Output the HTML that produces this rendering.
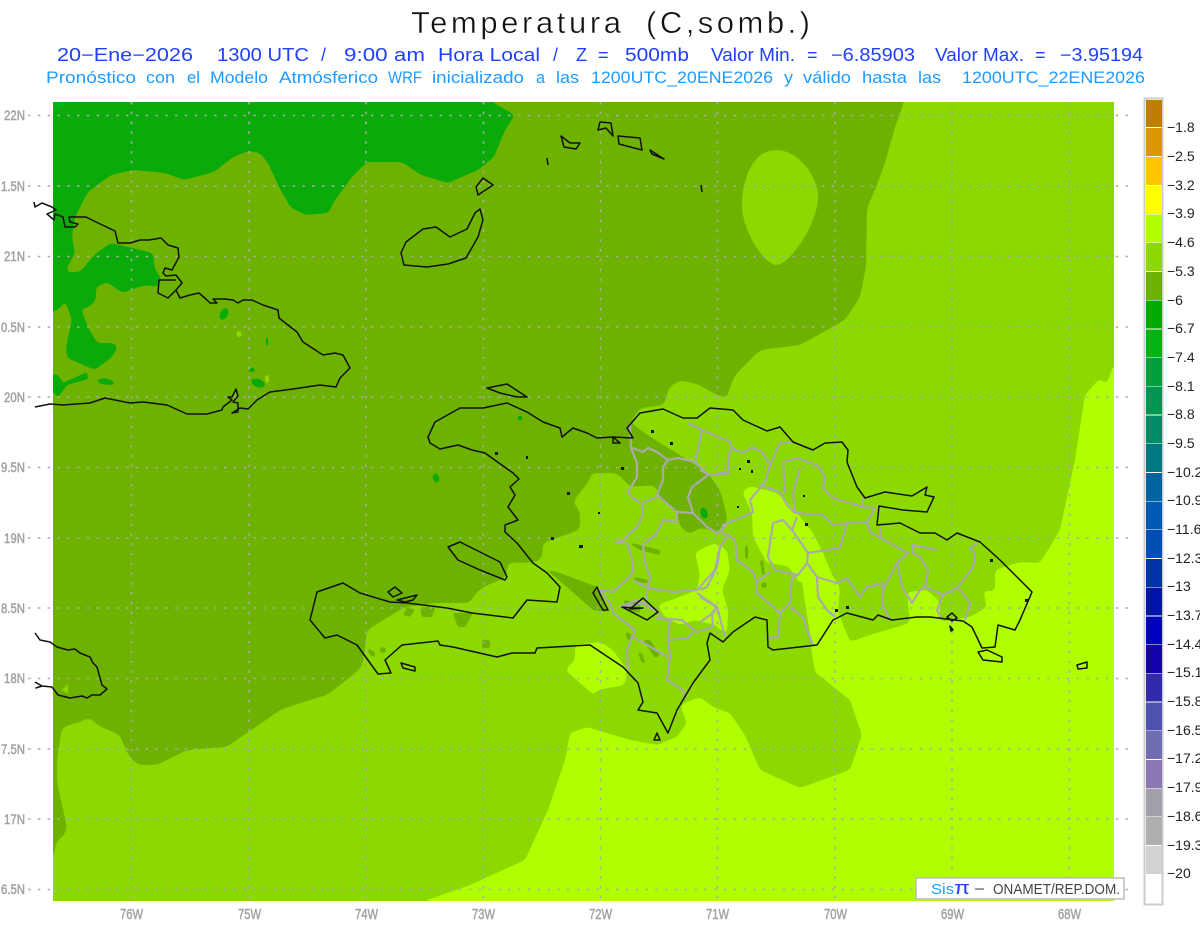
<!DOCTYPE html>
<html><head><meta charset="utf-8"><style>
html,body{margin:0;padding:0;background:#fff}
svg{display:block;font-family:"Liberation Sans",sans-serif}
.g{fill:none;stroke:#aaa;stroke-width:1.6;stroke-dasharray:2.5 7.3}
.c{fill:none;stroke:#111;stroke-width:1.5;stroke-linejoin:round}
.b{fill:none;stroke:#aaa;stroke-width:2.2;stroke-linejoin:round}
.l{fill:#a2a2a2;font-size:14px;stroke:#a2a2a2;stroke-width:.5}
.m{fill:#a2a2a2;font-size:15px;stroke:#a2a2a2;stroke-width:.5}
.t2{fill:#2040ff;font-size:18px}
.t3{fill:#1e9bff;font-size:17px}
.k{fill:#222;font-size:14px}
</style></head><body>
<svg width="1200" height="927" viewBox="0 0 1200 927" xmlns="http://www.w3.org/2000/svg">
<defs>
<clipPath id="mp"><rect x="53" y="102" width="1061" height="799"/></clipPath>
<filter id="s4" filterUnits="userSpaceOnUse" x="0" y="60" width="1200" height="867" color-interpolation-filters="sRGB">
<feGaussianBlur stdDeviation="4"/><feComponentTransfer><feFuncA type="linear" slope="14" intercept="-6.5"/></feComponentTransfer>
</filter>
<filter id="s3" filterUnits="userSpaceOnUse" x="0" y="60" width="1200" height="867" color-interpolation-filters="sRGB">
<feGaussianBlur stdDeviation="2.6"/><feComponentTransfer><feFuncA type="linear" slope="12" intercept="-5.5"/></feComponentTransfer>
</filter>
<filter id="s1" filterUnits="userSpaceOnUse" x="0" y="60" width="1200" height="867" color-interpolation-filters="sRGB">
<feGaussianBlur stdDeviation="1"/><feComponentTransfer><feFuncA type="linear" slope="6" intercept="-2.3"/></feComponentTransfer>
</filter>
</defs>
<rect width="1200" height="927" fill="#fff"/>
<g fill="#111" font-size="31" stroke="#fff" stroke-width=".45">
<text x="411" y="33" textLength="210" lengthAdjust="spacing">Temperatura</text>
<text x="646" y="33" textLength="164" lengthAdjust="spacing">(C,somb.)</text>
</g>
<g class="t2">
<text x="57" y="61" textLength="136" lengthAdjust="spacingAndGlyphs">20−Ene−2026</text>
<text x="217" y="61" textLength="92" lengthAdjust="spacingAndGlyphs">1300 UTC</text>
<text x="321" y="61">/</text>
<text x="344" y="61" textLength="81" lengthAdjust="spacingAndGlyphs">9:00 am</text>
<text x="438" y="61" textLength="102" lengthAdjust="spacingAndGlyphs">Hora Local</text>
<text x="553" y="61">/</text>
<text x="576" y="61">Z</text>
<text x="598" y="61">=</text>
<text x="625" y="61" textLength="64" lengthAdjust="spacingAndGlyphs">500mb</text>
<text x="711" y="61" textLength="84" lengthAdjust="spacingAndGlyphs">Valor Min.</text>
<text x="807" y="61">=</text>
<text x="831" y="61" textLength="84" lengthAdjust="spacingAndGlyphs">−6.85903</text>
<text x="935" y="61" textLength="89" lengthAdjust="spacingAndGlyphs">Valor Max.</text>
<text x="1035" y="61">=</text>
<text x="1060" y="61" textLength="83" lengthAdjust="spacingAndGlyphs">−3.95194</text>
</g>
<g class="t3">
<text x="46" y="83" textLength="90" lengthAdjust="spacingAndGlyphs">Pronóstico</text>
<text x="146" y="83" textLength="29" lengthAdjust="spacingAndGlyphs">con</text>
<text x="187" y="83" textLength="13" lengthAdjust="spacingAndGlyphs">el</text>
<text x="210" y="83" textLength="58" lengthAdjust="spacingAndGlyphs">Modelo</text>
<text x="279" y="83" textLength="99" lengthAdjust="spacingAndGlyphs">Atmósferico</text>
<text x="388" y="83" textLength="34" lengthAdjust="spacingAndGlyphs">WRF</text>
<text x="432" y="83" textLength="92" lengthAdjust="spacingAndGlyphs">inicializado</text>
<text x="536" y="83" textLength="9" lengthAdjust="spacingAndGlyphs">a</text>
<text x="556" y="83" textLength="23" lengthAdjust="spacingAndGlyphs">las</text>
<text x="591" y="83" textLength="182" lengthAdjust="spacingAndGlyphs">1200UTC_20ENE2026</text>
<text x="784" y="83" textLength="9" lengthAdjust="spacingAndGlyphs">y</text>
<text x="803" y="83" textLength="48" lengthAdjust="spacingAndGlyphs">válido</text>
<text x="862" y="83" textLength="45" lengthAdjust="spacingAndGlyphs">hasta</text>
<text x="918" y="83" textLength="23" lengthAdjust="spacingAndGlyphs">las</text>
<text x="962" y="83" textLength="183" lengthAdjust="spacingAndGlyphs">1200UTC_22ENE2026</text>
</g>

<!-- map fills -->
<g clip-path="url(#mp)">
<rect x="53" y="102" width="1061" height="799" fill="#8cd900"/>
<g fill="#b0ff00" filter="url(#s3)">
<polygon points="410,925 425,901 470,885 525,860 548,810 560,775 565,760 570,733 587,727 630,740 657,745 677,737 687,723 680,705 700,697 713,707 730,713 745,735 760,770 800,788 850,770 862,735 850,700 815,672 810,640 805,605 798,580 788,566 767,563 753,537 752,513 742,492 750,486 777,493 797,513 813,533 823,553 833,577 840,587 838,612 850,642 870,635 910,623 907,592 927,590 940,602 940,622 970,617 987,607 983,590 995,592 995,570 1020,562 1040,563 1060,530 1075,460 1085,395 1100,378 1107,385 1112,368 1140,345 1140,925"/>
<polygon points="695,552 715,543 727,550 730,570 722,590 728,610 727,635 715,625 695,620 680,625 665,617 657,605 677,598 697,590 700,575"/>
<polygon points="575,645 600,642 613,650 627,670 625,685 597,690 595,696 565,670 575,660"/>
</g>
<polygon fill="#8cd900" filter="url(#s1)" points="790,580 802,582 806,610 812,645 795,650 780,640 790,610"/>
<polygon fill="#6eb200" filter="url(#s4)" points="25,75 906,75 904,102 895,127 885,163 875,190 867,208 866,267 860,297 845,320 800,345 760,350 735,375 727,395 733,402 707,390 700,385 680,380 668,388 665,405 640,408 630,423 660,443 693,463 708,473 720,490 728,520 725,525 717,533 700,527 690,535 680,527 677,513 657,493 657,485 630,487 617,473 590,473 590,480 572,503 580,510 580,530 542,543 543,557 537,562 517,563 507,562 507,577 483,587 472,597 472,603 437,603 405,607 367,630 365,648 362,667 343,683 327,695 300,703 280,710 273,715 247,733 227,747 187,750 157,765 137,765 127,753 120,735 97,725 90,717 80,722 62,727 57,760 57,782 67,827 65,835 57,840 53,858 25,875"/>
<path fill="#8cd900" d="M776 150C800 150 820 180 818 200C816 225 790 265 776 265C760 262 742 225 742 207C742 175 755 150 776 150Z"/>
<g fill="#6eb200" filter="url(#s1)">
<polygon points="547,570 557,572 597,587 607,612 593,610 567,587"/>
<polygon points="627,542 660,550 660,555 640,550"/>
<polygon points="633,577 648,580 648,583 635,582"/>
<polygon points="407,607 415,610 410,617 403,615"/>
<polygon points="420,607 435,607 432,617 422,617"/>
<polygon points="453,613 473,613 465,627 458,627"/>
<polygon points="482,640 490,640 490,648 482,648"/>
<polygon points="367,648 375,652 375,657 370,655"/>
<ellipse cx="383" cy="650" rx="3" ry="3"/>
<polygon points="623,600 640,603 640,613 628,610"/>
<polygon points="643,640 650,640 660,655 655,658"/>
<polygon points="638,653 642,653 645,663 642,663"/>
<polygon points="625,633 630,633 632,640 628,640"/>
<polygon points="745,545 748,547 748,560 745,558"/>
<polygon points="760,560 763,560 765,575 762,575"/>
<ellipse cx="764" cy="585" rx="3" ry="3"/>
</g>
<g fill="#0aaa0a" filter="url(#s3)">
<polygon points="25,75 492,75 492,102 515,115 505,130 494,157 478,170 448,183 421,175 402,162 367,162 352,177 333,203 329,213 306,215 291,208 279,187 268,163 260,153 249,151 233,157 214,172 184,180 165,173 134,170 111,175 88,192 75,217 72,237 75,253 65,272 80,272 96,253 111,243 153,253 155,270 161,277 159,287 145,285 122,293 107,282 96,287 96,300 88,308 78,308 80,307 88,327 97,343 113,343 118,347 112,357 95,370 67,358 66,347 72,320 65,300 60,308 53,312 25,325"/>
</g>
<polygon fill="#00b414" points="53,102 70,102 60,108 53,112"/>
<g fill="#0aaa0a" filter="url(#s1)">
<polygon points="30,372 58,375 63,383 87,372 88,379 67,385 58,397 53,392 30,392"/>
<polygon points="97,380 105,378 113,381 114,385 100,384"/>
</g>
<g fill="#0aaa0a">
<ellipse cx="224" cy="314" rx="4" ry="6" transform="rotate(25 224 314)"/>
<ellipse cx="258" cy="383" rx="7" ry="4" transform="rotate(20 258 383)"/>
<ellipse cx="252" cy="370" rx="3" ry="2"/>
<rect x="266" y="338" width="2" height="7"/>
<ellipse cx="436" cy="478" rx="3" ry="4.5" transform="rotate(-20 436 478)"/>
<rect x="518" y="416" width="4" height="4"/>
<ellipse cx="704" cy="513" rx="3.5" ry="5.5" transform="rotate(-15 704 513)"/>
</g>
<g fill="#8cd900">
<ellipse cx="239" cy="334" rx="2.5" ry="3"/>
<ellipse cx="267" cy="379" rx="2" ry="4"/>
<polygon points="62,690 68,684 68,694"/>
</g>
</g>

<!-- grid -->
<g class="g">
<path d="M28 115.5H1132M28 186H1132M28 256.5H1132M28 327H1132M28 397H1132M28 467.5H1132M28 538H1132M28 608H1132M28 678.5H1132M28 749H1132M28 819H1132M28 889.5H1132"/>
<path d="M131.5 102V905M249 102V905M366 102V905M483.5 102V905M600.5 102V905M717.5 102V905M835 102V905M952 102V905M1069.5 102V905"/>
</g>
<g class="l">
<text x="4" y="120" textLength="21" lengthAdjust="spacingAndGlyphs">22N</text>
<text x="1" y="191" textLength="24" lengthAdjust="spacingAndGlyphs">1.5N</text>
<text x="4" y="261" textLength="21" lengthAdjust="spacingAndGlyphs">21N</text>
<text x="1" y="332" textLength="24" lengthAdjust="spacingAndGlyphs">0.5N</text>
<text x="4" y="402" textLength="21" lengthAdjust="spacingAndGlyphs">20N</text>
<text x="1" y="472" textLength="24" lengthAdjust="spacingAndGlyphs">9.5N</text>
<text x="4" y="543" textLength="21" lengthAdjust="spacingAndGlyphs">19N</text>
<text x="1" y="613" textLength="24" lengthAdjust="spacingAndGlyphs">8.5N</text>
<text x="4" y="683" textLength="21" lengthAdjust="spacingAndGlyphs">18N</text>
<text x="1" y="754" textLength="24" lengthAdjust="spacingAndGlyphs">7.5N</text>
<text x="4" y="824" textLength="21" lengthAdjust="spacingAndGlyphs">17N</text>
<text x="1" y="894" textLength="24" lengthAdjust="spacingAndGlyphs">6.5N</text>
</g>
<g class="m">
<text x="120" y="919" textLength="23" lengthAdjust="spacingAndGlyphs">76W</text>
<text x="238" y="919" textLength="23" lengthAdjust="spacingAndGlyphs">75W</text>
<text x="355" y="919" textLength="23" lengthAdjust="spacingAndGlyphs">74W</text>
<text x="472" y="919" textLength="23" lengthAdjust="spacingAndGlyphs">73W</text>
<text x="589" y="919" textLength="23" lengthAdjust="spacingAndGlyphs">72W</text>
<text x="706" y="919" textLength="23" lengthAdjust="spacingAndGlyphs">71W</text>
<text x="824" y="919" textLength="23" lengthAdjust="spacingAndGlyphs">70W</text>
<text x="941" y="919" textLength="23" lengthAdjust="spacingAndGlyphs">69W</text>
<text x="1058" y="919" textLength="23" lengthAdjust="spacingAndGlyphs">68W</text>
</g>

<!-- provincial borders -->
<g class="b">
<polyline points="630,423 631,448 637,463 637,477 628,492 633,498 643,505 642,517 637,527 623,540 615,543 627,543 633,562 633,573 623,583 613,592 603,590 600,590 610,603 613,613 635,630 627,650 628,670"/>
<polyline points="632,448 643,452 648,448 657,452 668,460 678,458 695,462 702,430 688,423"/>
<polyline points="702,430 730,442 732,448 743,453 752,447 762,452 770,465 780,443 792,442"/>
<polyline points="668,460 663,467 663,480 657,495 677,512 693,513 707,527 717,533 727,525"/>
<polyline points="643,503 657,497"/>
<polyline points="677,513 677,522 663,520 657,533 643,545 645,563 650,577 648,588 673,592 697,590 715,570 720,547 728,535 722,533 723,525 740,518 753,512 750,500 765,482 770,465"/>
<polyline points="633,580 648,588 645,603 620,607 637,600 658,612 663,620"/>
<polyline points="697,593 717,607 712,613 713,627 697,632 682,620 657,618 670,620 668,640 670,657 667,680 683,690 685,698"/>
<polyline points="633,637 668,657"/>
<polyline points="668,640 688,638 693,632"/>
<polyline points="695,462 708,475 730,473"/>
<polyline points="708,475 692,487 688,497 693,513"/>
<polyline points="732,448 728,457 728,472 710,475 700,470"/>
<polyline points="760,485 780,492 787,505 795,513 823,515 833,525 847,523 867,522 875,508 863,507 863,497"/>
<polyline points="783,462 797,458 817,465 825,477 823,488 833,498 863,507"/>
<polyline points="800,468 793,493 795,513"/>
<polyline points="783,462 785,493"/>
<polyline points="797,517 792,530 808,553 807,563 798,575 775,570 768,557 773,523 783,520 792,530"/>
<polyline points="808,553 840,548 847,523"/>
<polyline points="807,563 817,577 837,583 847,578 860,597 867,587 883,583 882,603 890,620"/>
<polyline points="817,577 818,597 827,610 835,617"/>
<polyline points="798,575 792,578 790,603 780,613 757,593 757,582 770,572"/>
<polyline points="790,607 803,617 807,630 813,645"/>
<polyline points="780,613 778,637 767,638"/>
<polyline points="757,582 753,572 737,560 735,540 728,535"/>
<polyline points="720,547 717,567 707,587 700,590"/>
<polyline points="700,597 717,607 713,613 700,622"/>
<polyline points="717,607 725,637"/>
<polyline points="867,523 870,532 908,553 897,563 883,590"/>
<polyline points="897,563 902,587 912,603 920,590 925,587 928,570 920,557 913,553 913,545 937,550"/>
<polyline points="880,527 880,537"/>
<polyline points="925,587 943,595 958,587 970,603 965,620"/>
<polyline points="958,587 973,567 975,553 970,548 978,543"/>
<polyline points="943,595 937,610 942,620"/>
</g>

<!-- coast -->
<g class="c">
<polyline points="34,202 35,207 42,203 52,207 56,210 47,214 54,220 55,214 63,217 65,227 75,227 78,224 70,222 69,217 86,217 96,222 115,231 118,243 130,243 140,240 149,240 161,238 168,245 178,248 179,257 172,270 165,268 163,273 166,276 176,275 182,283 176,290 168,298 158,293 159,280 176,280"/>
<polyline points="176,290 180,298 190,295 199,293 207,300 210,303 217,303 213,299 225,299 233,300 238,303 243,300 252,300 263,305 278,310 279,318 297,332 303,342 323,355 335,353 343,355 350,368 340,378 336,387 320,385 293,389 270,392 257,400 248,409 240,408 232,413 238,412 238,403 233,402 238,396 236,389 232,397 228,397 232,400 223,407 222,410 207,414 187,414 167,405 143,402 130,403 105,398 90,403 63,405 50,404 35,407"/>
<polyline points="35,633 40,640 50,642 57,647 68,650 75,649 80,653 90,657 93,663 97,667 102,685 107,689 100,695 92,695 87,698 82,696 70,698 58,695 52,687 42,686 36,688 42,686 35,682"/>
<polygon points="480,209 483,220 478,237 466,258 448,264 427,267 404,265 401,253 406,242 423,229 436,227 450,237 467,229 475,213"/>
<polygon points="483,178 493,185 478,195 476,187"/>
<polygon points="561,136 570,143 580,143 576,149 564,147"/>
<polyline points="547,158 548,165"/>
<polygon points="600,122 611,123 613,136 606,128 598,130"/>
<polygon points="618,136 640,138 642,150 619,144"/>
<polygon points="650,150 664,159 652,154"/>
<polyline points="701,185 702,192"/>
<polygon points="487,388 507,384 527,397 517,397 500,393"/>
<polygon points="448,547 460,542 500,562 507,577 505,580 480,570 458,560"/>
<polygon points="388,592 395,587 402,593 393,597"/>
<polygon points="397,600 417,595 413,600 405,602"/>
<polygon points="401,663 415,667 415,671 403,668"/>
<polygon points="657,733 660,740 654,740"/>
<polygon points="978,652 987,650 1002,657 1002,662 983,660"/>
<polygon points="947,617 952,613 957,618 952,621"/>
<polygon points="950,626 953,630 951,631"/>
<polygon points="1077,665 1087,662 1087,668 1078,669"/>
<polygon points="597,587 593,593 603,610 608,610 600,594"/>
<polygon points="643,598 658,612 647,620 622,607 632,608 643,608 630,609"/>
<polygon points="428,437 435,422 460,408 483,408 507,403 527,412 543,422 560,428 562,437 573,428 587,433 597,438 613,437 620,443 613,443 613,437 633,438 627,428 640,413 663,409 683,418 697,418 710,408 733,410 743,420 767,431 780,427 793,442 813,450 825,443 842,442 848,450 847,462 857,487 865,498 885,492 912,496 927,487 925,495 934,497 927,512 903,510 879,506 877,525 900,523 920,533 935,533 947,540 957,533 980,542 1000,560 1032,592 1020,620 1015,630 998,625 995,647 982,648 972,627 963,621 930,617 917,617 892,620 878,615 873,620 847,613 833,620 817,645 773,650 768,647 767,620 755,617 733,632 723,642 710,633 707,643 710,660 693,683 677,710 668,733 657,713 638,710 643,702 638,683 623,667 590,645 537,648 535,653 512,653 497,657 453,647 440,645 438,641 420,643 402,645 385,660 391,673 378,674 357,645 337,635 325,638 310,620 317,592 343,583 360,593 390,602 407,603 447,608 472,613 513,618 527,600 557,602 560,587 547,573 533,563 517,543 505,532 505,525 518,520 508,507 515,495 510,487 519,479 513,473 485,453 472,450 458,445 440,449 430,443"/>
</g>
<g fill="#111">
<rect x="495" y="452" width="3" height="3"/><rect x="526" y="456" width="2" height="3"/><rect x="567" y="492" width="3" height="3"/><rect x="598" y="512" width="2" height="2"/><rect x="551" y="537" width="3" height="3"/><rect x="579" y="545" width="4" height="3"/><rect x="621" y="467" width="3" height="3"/><rect x="651" y="430" width="3" height="3"/><rect x="670" y="442" width="3" height="3"/><rect x="747" y="460" width="3" height="3"/><rect x="739" y="468" width="2" height="2"/><rect x="751" y="470" width="2" height="3"/><rect x="803" y="495" width="2" height="2"/><rect x="805" y="523" width="3" height="3"/><rect x="990" y="559" width="3" height="3"/><rect x="1025" y="599" width="3" height="3"/><rect x="835" y="609" width="3" height="3"/><rect x="846" y="606" width="3" height="3"/><rect x="737" y="506" width="2" height="2"/>
</g>

<!-- logo -->
<rect x="916" y="878" width="208" height="21" fill="#fff" stroke="#bbb" stroke-width="1.5"/>
<text x="931" y="894" font-size="15" fill="#1e9bff" textLength="23" lengthAdjust="spacingAndGlyphs">Sis</text>
<text x="954" y="894" font-size="18" fill="#2040ff" textLength="16" lengthAdjust="spacingAndGlyphs">π</text>
<text x="974" y="894" font-size="15" fill="#444" textLength="11" lengthAdjust="spacingAndGlyphs">−</text>
<text x="993" y="894" font-size="15" fill="#444" textLength="127" lengthAdjust="spacingAndGlyphs">ONAMET/REP.DOM.</text>

<!-- colorbar -->
<rect x="1144.5" y="98.5" width="18" height="806" fill="#fff" stroke="#ccc" stroke-width="2"/>
<g>
<rect x="1146" y="100" width="16" height="27" fill="#be7f00"/>
<rect x="1146" y="128" width="16" height="28" fill="#dc9600"/>
<rect x="1146" y="157" width="16" height="28" fill="#ffc300"/>
<rect x="1146" y="186" width="16" height="28" fill="#ffff00"/>
<rect x="1146" y="214.5" width="16" height="28" fill="#b0ff00"/>
<rect x="1146" y="243" width="16" height="28" fill="#8cd900"/>
<rect x="1146" y="272" width="16" height="28" fill="#6eb200"/>
<rect x="1146" y="300.5" width="16" height="28" fill="#00aa00"/>
<rect x="1146" y="329.5" width="16" height="28" fill="#00b414"/>
<rect x="1146" y="358" width="16" height="28" fill="#00a03c"/>
<rect x="1146" y="386.5" width="16" height="28" fill="#009650"/>
<rect x="1146" y="415.5" width="16" height="28" fill="#008c64"/>
<rect x="1146" y="444" width="16" height="28" fill="#007882"/>
<rect x="1146" y="473" width="16" height="28" fill="#0064a0"/>
<rect x="1146" y="501.5" width="16" height="28" fill="#005ab4"/>
<rect x="1146" y="530" width="16" height="28" fill="#0050b4"/>
<rect x="1146" y="559" width="16" height="28" fill="#0032aa"/>
<rect x="1146" y="587.5" width="16" height="28" fill="#0014aa"/>
<rect x="1146" y="616.5" width="16" height="28" fill="#0000c0"/>
<rect x="1146" y="645" width="16" height="28" fill="#1400aa"/>
<rect x="1146" y="673.5" width="16" height="28" fill="#3228aa"/>
<rect x="1146" y="702.5" width="16" height="28" fill="#5050b0"/>
<rect x="1146" y="731" width="16" height="28" fill="#6e6eb0"/>
<rect x="1146" y="760" width="16" height="28" fill="#8c78b4"/>
<rect x="1146" y="788.5" width="16" height="28" fill="#a0a0aa"/>
<rect x="1146" y="817" width="16" height="28" fill="#afafaf"/>
<rect x="1146" y="846" width="16" height="28" fill="#d2d2d2"/>
</g>
<g class="k">
<text x="1167" y="132">−1.8</text><text x="1167" y="161">−2.5</text><text x="1167" y="190">−3.2</text><text x="1167" y="218">−3.9</text><text x="1167" y="247">−4.6</text><text x="1167" y="276">−5.3</text><text x="1167" y="305">−6</text><text x="1167" y="333">−6.7</text><text x="1167" y="362">−7.4</text><text x="1167" y="391">−8.1</text><text x="1167" y="419">−8.8</text><text x="1167" y="448">−9.5</text><text x="1167" y="477">−10.2</text><text x="1167" y="505">−10.9</text><text x="1167" y="534">−11.6</text><text x="1167" y="563">−12.3</text><text x="1167" y="591">−13</text><text x="1167" y="620">−13.7</text><text x="1167" y="649">−14.4</text><text x="1167" y="677">−15.1</text><text x="1167" y="706">−15.8</text><text x="1167" y="735">−16.5</text><text x="1167" y="763">−17.2</text><text x="1167" y="792">−17.9</text><text x="1167" y="821">−18.6</text><text x="1167" y="850">−19.3</text><text x="1167" y="878">−20</text>
</g>
</svg>
</body></html>
